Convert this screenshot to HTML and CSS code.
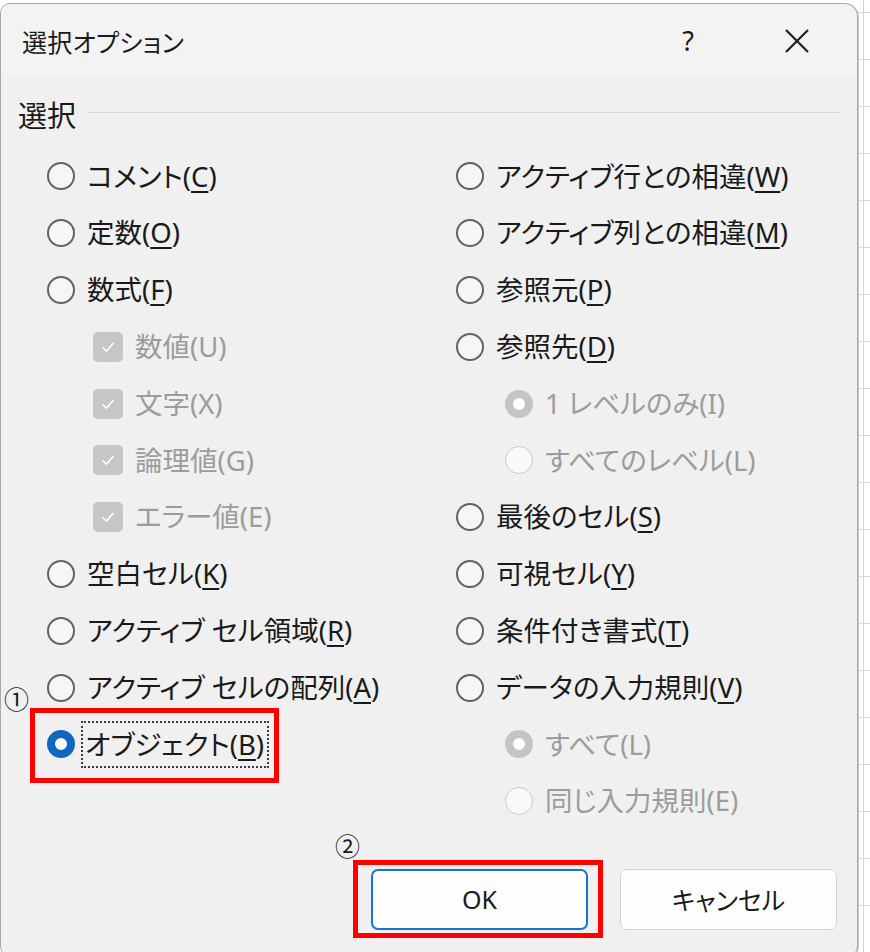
FILE: index.html
```html
<!DOCTYPE html>
<html lang="ja">
<head>
<meta charset="utf-8">
<title>選択オプション</title>
<link rel="stylesheet" href="styles.css">
</head>
<body>
<div class="dialog">
  <div class="titlebar">
    <span class="title">選択オプション</span>
    <span class="help">?</span>
    <span class="close"><svg width="26" height="26" viewBox="0 0 26 26"><path d="M2 2 L24 24 M24 2 L2 24" stroke="#1f1f1f" stroke-width="2.2" fill="none"/></svg></span>
  </div>
  <div class="body">
    <div class="group-head"><span class="group-label">選択</span><span class="group-line"></span></div>
    <div class="columns">
      <div class="col col-left">
        <div class="row"><span class="radio"></span><span class="label">コメント(<u>C</u>)</span></div>
        <div class="row"><span class="radio"></span><span class="label">定数(<u>O</u>)</span></div>
        <div class="row"><span class="radio"></span><span class="label">数式(<u>F</u>)</span></div>
        <div class="row sub-check"><span class="check"><svg width="18" height="18" viewBox="0 0 18 18"><path d="M3.5 9.5 L7.5 13 L14.5 5" stroke="#fff" stroke-width="1.6" fill="none"/></svg></span><span class="label dim">数値(U)</span></div>
        <div class="row sub-check"><span class="check"><svg width="18" height="18" viewBox="0 0 18 18"><path d="M3.5 9.5 L7.5 13 L14.5 5" stroke="#fff" stroke-width="1.6" fill="none"/></svg></span><span class="label dim">文字(X)</span></div>
        <div class="row sub-check"><span class="check"><svg width="18" height="18" viewBox="0 0 18 18"><path d="M3.5 9.5 L7.5 13 L14.5 5" stroke="#fff" stroke-width="1.6" fill="none"/></svg></span><span class="label dim">論理値(G)</span></div>
        <div class="row sub-check"><span class="check"><svg width="18" height="18" viewBox="0 0 18 18"><path d="M3.5 9.5 L7.5 13 L14.5 5" stroke="#fff" stroke-width="1.6" fill="none"/></svg></span><span class="label dim">エラー値(E)</span></div>
        <div class="row"><span class="radio"></span><span class="label">空白セル(<u>K</u>)</span></div>
        <div class="row"><span class="radio"></span><span class="label">アクティブ セル領域(<u>R</u>)</span></div>
        <div class="row"><span class="radio"></span><span class="label">アクティブ セルの配列(<u>A</u>)</span></div>
        <div class="row marked">
          <span class="num num1">①</span>
          <span class="radio on"></span><span class="label focus">オブジェクト(<u>B</u>)</span>
          <span class="redbox redbox1"></span>
        </div>
      </div>
      <div class="col col-right">
        <div class="row"><span class="radio"></span><span class="label">アクティブ行との相違(<u>W</u>)</span></div>
        <div class="row"><span class="radio"></span><span class="label">アクティブ列との相違(<u>M</u>)</span></div>
        <div class="row"><span class="radio"></span><span class="label">参照元(<u>P</u>)</span></div>
        <div class="row"><span class="radio"></span><span class="label">参照先(<u>D</u>)</span></div>
        <div class="row sub-radio"><span class="radio dis on"></span><span class="label dim">1 レベルのみ(I)</span></div>
        <div class="row sub-radio"><span class="radio dis"></span><span class="label dim">すべてのレベル(L)</span></div>
        <div class="row"><span class="radio"></span><span class="label">最後のセル(<u>S</u>)</span></div>
        <div class="row"><span class="radio"></span><span class="label">可視セル(<u>Y</u>)</span></div>
        <div class="row"><span class="radio"></span><span class="label">条件付き書式(<u>T</u>)</span></div>
        <div class="row"><span class="radio"></span><span class="label">データの入力規則(<u>V</u>)</span></div>
        <div class="row sub-radio"><span class="radio dis on"></span><span class="label dim">すべて(L)</span></div>
        <div class="row sub-radio"><span class="radio dis"></span><span class="label dim">同じ入力規則(E)</span></div>
      </div>
    </div>
    <div class="buttons">
      <div class="btn-wrap">
        <span class="num num2">②</span>
        <button class="btn ok">OK</button>
        <span class="redbox redbox2"></span>
      </div>
      <button class="btn">キャンセル</button>
    </div>
  </div>
</div>
</body>
</html>
```

FILE: styles.css
```css
html, body {
  margin: 0;
  padding: 0;
}
body {
  width: 870px;
  height: 952px;
  overflow: hidden;
  background-color: #ffffff;
  background-image:
    linear-gradient(to right, transparent 863px, #d4d4d4 863px, #d4d4d4 864px, transparent 864px),
    repeating-linear-gradient(to bottom, transparent 0, transparent 12px, #dadada 12px, #dadada 13px, transparent 13px, transparent 47px);
  font-family: "Noto Sans", "Noto Sans CJK JP", sans-serif;
  font-feature-settings: "palt";
  color: #1a1a1a;
}
.dialog {
  margin-top: 3px;
  width: 858px;
  height: 955px;
  box-sizing: border-box;
  background: #f0f0f0;
  border: 1px solid #a8a8a8;
  border-radius: 10px 14px 12px 12px;
  box-shadow: 1px 0 0 #c8c8c8;
  overflow: hidden;
}
.titlebar {
  height: 73px;
  background: #f3f3f3;
  display: flex;
  align-items: center;
  padding-left: 21px;
}
.title {
  font-size: 25px;
  flex: 1;
  letter-spacing: 0.3px;
}
.help {
  font-size: 27px;
  width: 30px;
  text-align: center;
  margin-right: 81px;
}
.close {
  display: flex;
  width: 26px;
  margin-right: 47px;
}
.body {
  position: relative;
}
.group-head {
  display: flex;
  align-items: center;
  height: 44px;
  margin-top: 16px;
  padding-left: 17px;
  padding-right: 16px;
}
.group-label {
  font-size: 29px;
  line-height: 1;
}
.group-line {
  flex: 1;
  height: 1px;
  background: #d9d9d9;
  margin-left: 12px;
  margin-top: -6px;
}
.columns {
  display: flex;
  margin-top: 11px;
}
.col {
  display: flex;
  flex-direction: column;
}
.col-left {
  box-sizing: border-box;
  padding-left: 46px;
  width: 455px;
}
.row {
  position: relative;
  display: flex;
  align-items: center;
  height: 56.8px;
  gap: 12px;
}
.sub-check {
  padding-left: 46px;
}
.sub-radio {
  padding-left: 49px;
}
.label {
  font-size: 27.5px;
  white-space: nowrap;
  line-height: 1;
}
.label u {
  text-decoration-thickness: 2px;
  text-underline-offset: 4px;
}
.label.dim {
  color: #9c9c9c;
}
.radio {
  flex: none;
  width: 28px;
  height: 28px;
  box-sizing: border-box;
  border-radius: 50%;
  border: 2px solid #636363;
  background: #f6f6f6;
}
.radio.on {
  border: 8px solid #0f67be;
  background: #ffffff;
}
.radio.dis {
  border: 1.5px solid #c9c9c9;
  background: #f9f9f9;
}
.radio.dis.on {
  border: 8px solid #c4c4c4;
  background: #ffffff;
}
.check {
  flex: none;
  width: 30px;
  height: 30px;
  border-radius: 5px;
  background: #c6c6c6;
  display: flex;
  align-items: center;
  justify-content: center;
}
.focus {
  outline: 2px dotted #3a3a3a;
  outline-offset: 0;
  padding: 8px 3px 8px 2px;
  margin-left: -4px;
}
.redbox {
  position: absolute;
  border: 5px solid #ff0000;
  box-sizing: border-box;
  pointer-events: none;
}
.redbox1 {
  left: -17px;
  top: -8px;
  width: 249px;
  height: 75px;
}
.num {
  position: absolute;
  font-size: 25px;
  line-height: 1;
  color: #1a1a1a;
}
.num1 {
  left: -43px;
  top: -29px;
}
.buttons {
  display: flex;
  justify-content: flex-end;
  gap: 32px;
  padding-right: 20px;
  margin-top: 39px;
}
.btn-wrap {
  position: relative;
  display: flex;
}
.btn {
  width: 217px;
  height: 61px;
  box-sizing: border-box;
  background: #fdfdfd;
  border: 1.5px solid #d3d3d3;
  border-radius: 7px;
  font-family: "Noto Sans", "Noto Sans CJK JP", sans-serif;
  font-feature-settings: "palt";
  font-size: 25px;
  color: #1a1a1a;
  padding: 0;
}
.btn.ok {
  border: 2px solid #1a74cc;
}
.redbox2 {
  left: -18px;
  top: -9px;
  width: 250px;
  height: 78px;
}
.num2 {
  left: -36px;
  top: -35px;
}
```
